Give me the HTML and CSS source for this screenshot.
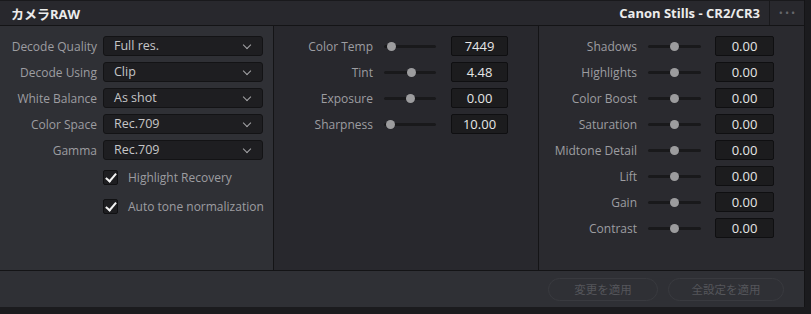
FILE: index.html
```html
<!DOCTYPE html>
<html lang="ja">
<head>
    <meta charset="UTF-8">
    <title>カメラRAW</title>
    <link rel="stylesheet" href="styles.css">
</head>
<body>

    <div class="panel">
        <div class="header">
            <div class="title">カメラRAW</div>
            <div class="source">Canon Stills - CR2/CR3</div>
            <div class="more">&bull;&bull;&bull;</div>
        </div>

        <div class="columns">
            <!-- decode settings -->
            <div class="col col-left">
                <div class="row">
                    <span class="label">Decode Quality</span>
                    <div class="select">Full res.<span class="chev"></span></div>
                </div>
                <div class="row">
                    <span class="label">Decode Using</span>
                    <div class="select">Clip<span class="chev"></span></div>
                </div>
                <div class="row">
                    <span class="label">White Balance</span>
                    <div class="select">As shot<span class="chev"></span></div>
                </div>
                <div class="row">
                    <span class="label">Color Space</span>
                    <div class="select">Rec.709<span class="chev"></span></div>
                </div>
                <div class="row">
                    <span class="label">Gamma</span>
                    <div class="select">Rec.709<span class="chev"></span></div>
                </div>

                <div class="checks">
                    <label class="check"><span class="box"></span>Highlight Recovery</label>
                    <label class="check"><span class="box"></span>Auto tone normalization</label>
                </div>
            </div>

            <!-- white balance / exposure -->
            <div class="col col-mid">
                <div class="srow">
                    <span class="label">Color Temp</span>
                    <div class="slider"><span class="knob" style="left: 7px"></span></div>
                    <div class="value">7449</div>
                </div>
                <div class="srow">
                    <span class="label">Tint</span>
                    <div class="slider"><span class="knob" style="left: 27px"></span></div>
                    <div class="value">4.48</div>
                </div>
                <div class="srow">
                    <span class="label">Exposure</span>
                    <div class="slider"><span class="knob" style="left: 26px"></span></div>
                    <div class="value">0.00</div>
                </div>
                <div class="srow">
                    <span class="label">Sharpness</span>
                    <div class="slider"><span class="knob" style="left: 6px"></span></div>
                    <div class="value">10.00</div>
                </div>
            </div>

            <!-- tone -->
            <div class="col col-right">
                <div class="srow">
                    <span class="label">Shadows</span>
                    <div class="slider"><span class="knob"></span></div>
                    <div class="value">0.00</div>
                </div>
                <div class="srow">
                    <span class="label">Highlights</span>
                    <div class="slider"><span class="knob"></span></div>
                    <div class="value">0.00</div>
                </div>
                <div class="srow">
                    <span class="label">Color Boost</span>
                    <div class="slider"><span class="knob"></span></div>
                    <div class="value">0.00</div>
                </div>
                <div class="srow">
                    <span class="label">Saturation</span>
                    <div class="slider"><span class="knob"></span></div>
                    <div class="value">0.00</div>
                </div>
                <div class="srow">
                    <span class="label">Midtone Detail</span>
                    <div class="slider"><span class="knob"></span></div>
                    <div class="value">0.00</div>
                </div>
                <div class="srow">
                    <span class="label">Lift</span>
                    <div class="slider"><span class="knob"></span></div>
                    <div class="value">0.00</div>
                </div>
                <div class="srow">
                    <span class="label">Gain</span>
                    <div class="slider"><span class="knob"></span></div>
                    <div class="value">0.00</div>
                </div>
                <div class="srow">
                    <span class="label">Contrast</span>
                    <div class="slider"><span class="knob"></span></div>
                    <div class="value">0.00</div>
                </div>
            </div>
        </div>

        <div class="footer">
            <button class="pill pill-a">変更を適用</button>
            <button class="pill pill-b">全設定を適用</button>
        </div>
    </div>

</body>
</html>
```

FILE: styles.css
```css
body {
    margin: 0;
    background-color: #1b1b1e;
    font-family: 'Open Sans', 'Noto Sans CJK JP', sans-serif;
    width: 811px;
    height: 314px;
    overflow: hidden;
}

.panel {
    width: 804px;
    border-right: 1px solid #141416;
    background-color: #2f3035;
}

/* header */
.header {
    height: 24px;
    border-top: 1px solid #19191c;
    border-bottom: 1px solid #141416;
    background-color: #28282d;
    display: flex;
    align-items: center;
}

.title {
    padding-left: 11px;
    font-size: 13px;
    font-weight: 700;
    color: #ececec;
    flex: 1;
}

.source {
    font-size: 13px;
    font-weight: 700;
    color: #ececec;
    padding-right: 9px;
}

.more {
    width: 34px;
    height: 24px;
    line-height: 23px;
    border-left: 1px solid #19191c;
    text-align: center;
    color: #66676c;
    font-size: 11px;
    letter-spacing: 2px;
    text-indent: 2px;
}

/* body columns */
.columns {
    display: grid;
    grid-template-columns: 274px 265px 1fr;
    height: 244px;
    border-bottom: 1px solid #141416;
}

.col {
    padding-top: 10px;
    display: flex;
    flex-direction: column;
    gap: 6px;
}

.col-left {
    border-right: 1px solid #141416;
    background-color: #2f3035;
}

.col-mid {
    border-right: 1px solid #141416;
    background-color: #28282d;
}

.col-right {
    background-color: #2a2a2f;
}

.label {
    font-size: 12px;
    color: #9d9da1;
    text-align: right;
    white-space: nowrap;
}

.row {
    display: grid;
    grid-template-columns: 97px 160px;
    column-gap: 6px;
    height: 20px;
    align-items: center;
}

.select {
    position: relative;
    height: 18px;
    line-height: 18px;
    background-color: #1e1e21;
    border: 1px solid #131315;
    border-radius: 3px;
    padding-left: 10px;
    font-size: 12.5px;
    color: #c6c6c8;
}

.chev {
    position: absolute;
    right: 12px;
    top: 5px;
    width: 5px;
    height: 5px;
    border-right: 1.3px solid #a5a5a8;
    border-bottom: 1.3px solid #a5a5a8;
    transform: rotate(45deg);
}

.checks {
    padding-left: 103px;
    padding-top: 1px;
    display: flex;
    flex-direction: column;
    gap: 9px;
}

.check {
    display: flex;
    align-items: center;
    height: 20px;
    font-size: 12px;
    color: #9d9da1;
}

.box {
    position: relative;
    width: 13px;
    height: 13px;
    background-color: #1e1e21;
    border: 1px solid #111113;
    border-radius: 2px;
    margin-right: 10px;
}

.box::after {
    content: '';
    position: absolute;
    left: 4px;
    top: 0px;
    width: 4px;
    height: 9px;
    border-right: 2px solid #f4f4f4;
    border-bottom: 2px solid #f4f4f4;
    transform: rotate(40deg);
}

/* slider rows */
.srow {
    display: grid;
    height: 20px;
    align-items: center;
    column-gap: 11px;
}

.col-mid .srow {
    grid-template-columns: 99px 56px 57px;
}

.col-mid .slider {
    width: 52px;
}

.col-right .srow {
    grid-template-columns: 98px 56px 59px;
}

.col-right .slider {
    width: 53px;
}

.slider {
    position: relative;
    height: 3px;
    background-color: #19191b;
    border-radius: 2px;
}

.knob {
    position: absolute;
    left: 26px;
    top: -3px;
    width: 9px;
    height: 9px;
    margin-left: -4.5px;
    border-radius: 50%;
    background-color: #9c9c9e;
}

.value {
    height: 18px;
    line-height: 18px;
    background-color: #1c1c1e;
    border: 1px solid #0f0f11;
    border-radius: 2px;
    text-align: center;
    font-size: 13px;
    color: #e6e6e6;
}

/* footer */
.footer {
    height: 36px;
    display: flex;
    justify-content: flex-end;
    align-items: center;
    gap: 10px;
    padding-right: 20px;
    background-color: #2f3035;
}

.pill {
    height: 23px;
    background: transparent;
    border: 1px solid #393a3f;
    border-radius: 12px;
    font-family: 'Noto Sans CJK JP', sans-serif;
    font-size: 11.5px;
    color: #55565b;
    padding: 0;
}

.pill-a {
    width: 110px;
}

.pill-b {
    width: 116px;
}
```
